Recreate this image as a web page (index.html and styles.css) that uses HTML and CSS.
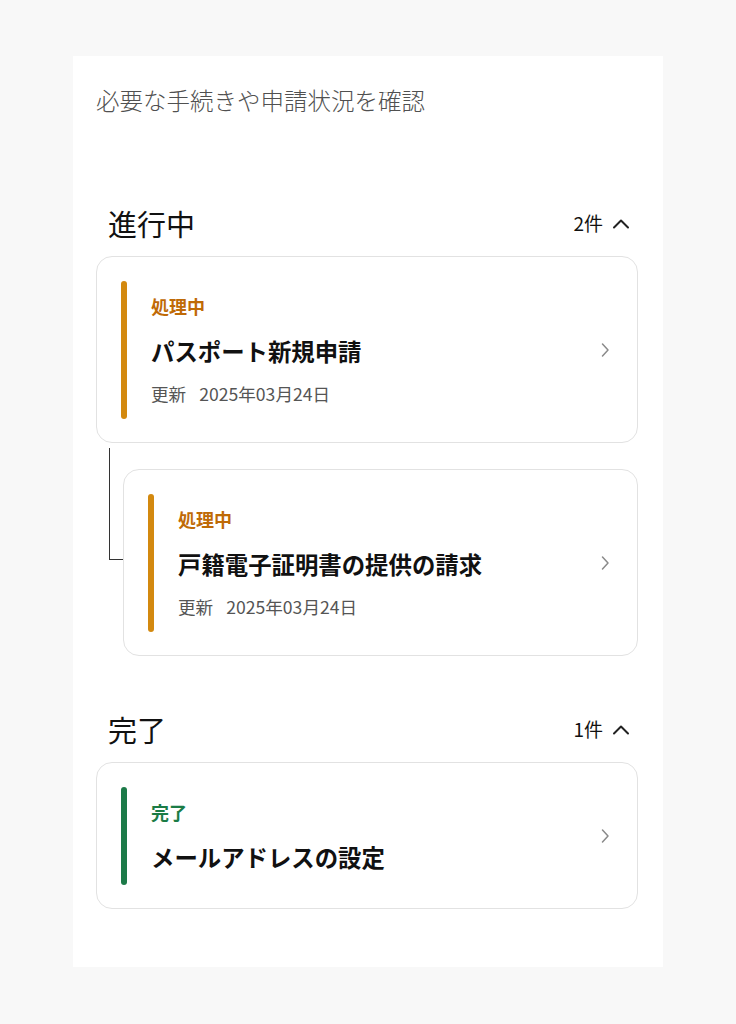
FILE: index.html
```html
<!DOCTYPE html>
<html lang="ja">
<head>
<meta charset="utf-8">
<title>手続き一覧</title>
<link rel="stylesheet" href="styles.css">
</head>
<body>
<main class="panel">
  <p class="subtitle">必要な手続きや申請状況を確認</p>

  <section class="group group-first">
    <header class="group-head">
      <h2 class="group-title">進行中</h2>
      <div class="group-count">2件
        <svg class="chev-up" width="18" height="11" viewBox="0 0 18 11"><path d="M2 9.5 L9 2.5 L16 9.5" fill="none" stroke="#222" stroke-width="2" stroke-linecap="round" stroke-linejoin="round"/></svg>
      </div>
    </header>

    <a class="card">
      <span class="bar bar-orange"></span>
      <div class="card-body">
        <div class="status status-orange">処理中</div>
        <div class="title">パスポート新規申請</div>
        <div class="date"><span class="date-label">更新</span>2025年03月24日</div>
      </div>
      <svg class="chev-right" width="10" height="16" viewBox="0 0 10 16"><path d="M2.5 2 L8 8 L2.5 14" fill="none" stroke="#8a8a8a" stroke-width="1.5" stroke-linecap="round" stroke-linejoin="round"/></svg>
    </a>

    <div class="child">
      <a class="card">
        <span class="bar bar-orange"></span>
        <div class="card-body">
          <div class="status status-orange">処理中</div>
          <div class="title">戸籍電子証明書の提供の請求</div>
          <div class="date"><span class="date-label">更新</span>2025年03月24日</div>
        </div>
        <svg class="chev-right" width="10" height="16" viewBox="0 0 10 16"><path d="M2.5 2 L8 8 L2.5 14" fill="none" stroke="#8a8a8a" stroke-width="1.5" stroke-linecap="round" stroke-linejoin="round"/></svg>
      </a>
    </div>
  </section>

  <section class="group group-second">
    <header class="group-head">
      <h2 class="group-title">完了</h2>
      <div class="group-count">1件
        <svg class="chev-up" width="18" height="11" viewBox="0 0 18 11"><path d="M2 9.5 L9 2.5 L16 9.5" fill="none" stroke="#222" stroke-width="2" stroke-linecap="round" stroke-linejoin="round"/></svg>
      </div>
    </header>

    <a class="card">
      <span class="bar bar-green"></span>
      <div class="card-body">
        <div class="status status-green">完了</div>
        <div class="title">メールアドレスの設定</div>
      </div>
      <svg class="chev-right" width="10" height="16" viewBox="0 0 10 16"><path d="M2.5 2 L8 8 L2.5 14" fill="none" stroke="#8a8a8a" stroke-width="1.5" stroke-linecap="round" stroke-linejoin="round"/></svg>
    </a>
  </section>
</main>
</body>
</html>
```

FILE: styles.css
```css
* { box-sizing: border-box; }

html, body {
  margin: 0;
  padding: 0;
  background: #f8f8f8;
}

body {
  font-family: "Noto Sans CJK JP", "Noto Sans", sans-serif;
  color: #111;
  padding-top: 56px;
  padding-left: 73px;
}

.panel {
  width: 590px;
  height: 911px;
  background: #fff;
  padding: 28px 25px 0 23px;
}

.subtitle {
  margin: 0;
  font-size: 23.5px;
  line-height: 32px;
  font-weight: 300;
  color: #505050;
}

.group-first { margin-top: 87px; }
.group-second { margin-top: 53px; }

.group-head {
  display: flex;
  align-items: center;
  justify-content: space-between;
  height: 40px;
  padding: 0 8px 0 12px;
  margin-bottom: 13px;
}

.group-title {
  margin: 0;
  font-size: 29px;
  line-height: 40px;
  font-weight: 400;
  color: #111;
}

.group-count {
  display: flex;
  align-items: center;
  gap: 9px;
  font-size: 19px;
  line-height: 28px;
  color: #111;
}

.chev-up { display: block; margin-top: 1px; }

.card {
  display: flex;
  align-items: stretch;
  border: 1px solid #e2e2e2;
  border-radius: 16px;
  background: #fff;
  padding: 24px 27px 23px 24px;
  text-decoration: none;
  color: inherit;
}

.bar {
  flex: 0 0 6px;
  width: 6px;
  border-radius: 3px;
}

.bar-orange { background: #d3890f; }
.bar-green { background: #1c7a48; }

.card-body {
  flex: 1;
  padding: 12px 0 12px 24px;
}

.status {
  font-size: 18px;
  line-height: 26px;
  font-weight: 700;
}

.status-orange { color: #bf6a06; }
.status-green { color: #1b7c46; }

.title {
  margin-top: 16px;
  font-size: 23.4px;
  line-height: 32px;
  font-weight: 700;
  color: #111;
}

.date {
  margin-top: 14px;
  font-size: 17.6px;
  line-height: 26px;
  color: #555;
}

.date-label { margin-right: 13px; }

.chev-right {
  align-self: center;
  flex: 0 0 auto;
}

.child {
  position: relative;
  margin-top: 26px;
  padding-left: 27px;
}

.child::before {
  content: "";
  position: absolute;
  left: 13px;
  top: -21px;
  width: 13px;
  height: 111px;
  border-left: 1.5px solid #333;
  border-bottom: 1.5px solid #333;
}
```
